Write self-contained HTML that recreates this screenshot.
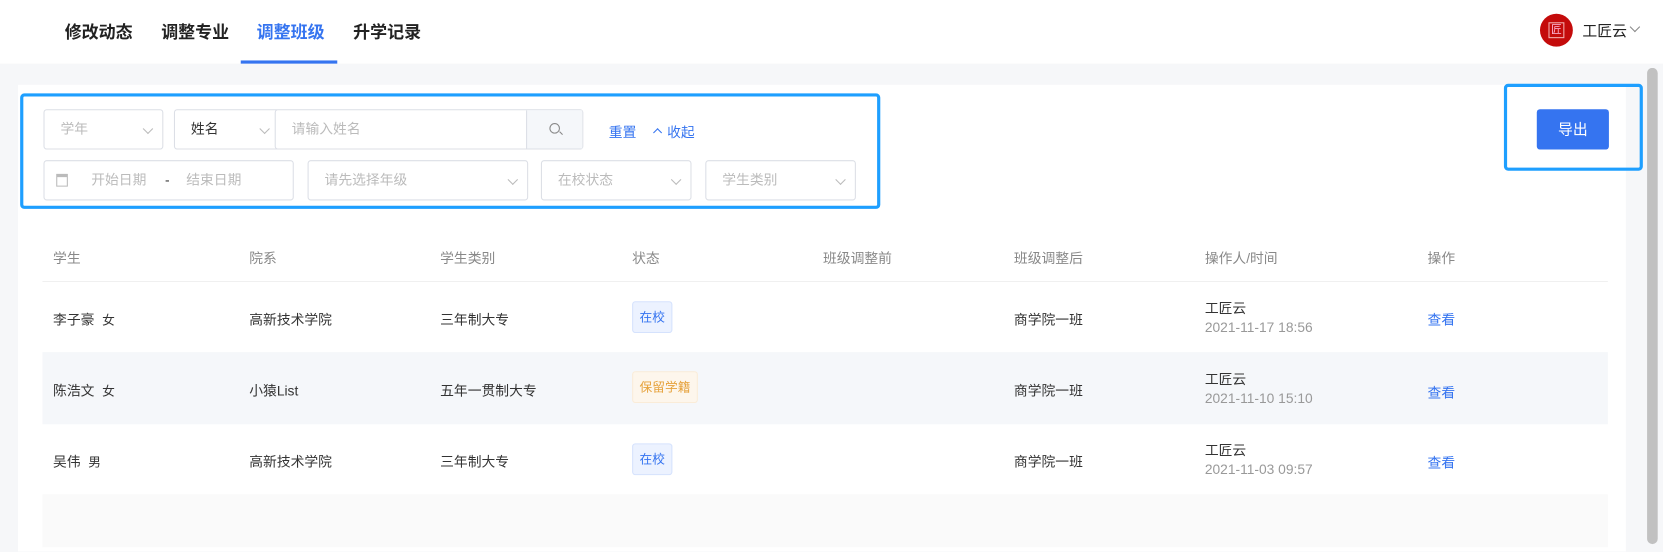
<!DOCTYPE html>
<html><head><meta charset="utf-8"><style>
*{box-sizing:border-box;margin:0;padding:0}
body{width:1663px;height:513px;overflow:hidden;background:#f6f7f9;font-family:"Liberation Sans","Noto Sans CJK SC",sans-serif;font-size:13px;color:#333;position:relative}
#s{position:absolute;left:0;top:0;width:1568px;height:484px;transform:scale(1.06059);transform-origin:0 0}
.hdr{position:absolute;left:0;top:0;width:1568px;height:60px;background:#fff}
.tab{position:absolute;top:17px;font-size:16px;font-weight:bold;color:#222}
.card{position:absolute;left:17px;top:80px;width:1516px;height:440px;background:#fff}
.abs{position:absolute}
.inp{position:absolute;border:1px solid #dcdfe6;border-radius:3px;height:38px;color:#bbb;font-size:13px;line-height:36px;padding-left:15px;background:#fff}
.chev{position:absolute;right:10px;top:14px;width:7px;height:7px;border-right:1px solid #bbb;border-bottom:1px solid #bbb;transform:rotate(45deg)}
.th{position:absolute;top:233px;color:#888;font-size:13px}
.row{position:absolute;left:40px;width:1476px}
.c{position:absolute;font-size:13px;color:#333}
.tag{position:absolute;border-radius:3px;font-size:12px;height:30px;line-height:28px;padding:0 6px}
.blue{background:#ecf2ff;border:1px solid #d5e2fd;color:#3574f0}
.org{background:#fdf6ec;border:1px solid #faecd8;color:#e6a23c}
.lk{color:#3574f0}
.gray{color:#999}
</style></head><body><div id="s">
<div class="hdr">
<div class="tab" style="left:61px">修改动态</div>
<div class="tab" style="left:152px">调整专业</div>
<div class="tab" style="left:242px;color:#3574f0">调整班级</div>
<div class="tab" style="left:333px">升学记录</div>
<div class="abs" style="left:227px;top:57px;width:91px;height:3px;background:#3574f0"></div>
<div class="abs" style="left:1452px;top:13px;width:31px;height:31px;border-radius:50%;background:#c40b0b"><div style="position:absolute;left:8px;top:8px;width:15px;height:15px;border:1px solid #f3b0b0;font-size:10px;color:#fbd;line-height:13px;text-align:center">匠</div></div>
<div class="abs" style="left:1492px;top:19px;font-size:14px;color:#222">工匠云</div>
<div class="abs" style="left:1538px;top:22px;width:7px;height:7px;border-right:1px solid #888;border-bottom:1px solid #888;transform:rotate(45deg)"></div>
</div>
<div class="abs" style="left:1553px;top:64px;width:10px;height:449px;background:#c1c1c1;border-radius:5px"></div>
<div class="card"></div>
<div class="abs" style="left:19px;top:88px;width:811px;height:109px;border:3px solid #1e9fff;border-radius:4px"></div>
<div class="abs" style="left:1418px;top:79px;width:131px;height:82px;border:3px solid #1e9fff;border-radius:4px"></div>
<div class="abs" style="left:1449px;top:103px;width:68px;height:38px;background:#3574f0;border-radius:3px;color:#fff;font-size:14px;line-height:38px;text-align:center">导出</div>
<div class="inp" style="left:41px;top:103px;width:113px">学年<span class="chev"></span></div>
<div class="inp" style="left:164px;top:103px;width:100px;color:#333">姓名<span class="chev"></span></div>
<div class="inp" style="left:259px;top:103px;width:291px;background:#fff;border-radius:3px">请输入姓名</div>
<div class="abs" style="left:496px;top:104px;width:53px;height:36px;background:#f5f7fa;border-left:1px solid #dcdfe6"><div style="position:absolute;left:21px;top:12px;width:10px;height:10px;border:1px solid #888;border-radius:50%"></div><div style="position:absolute;left:30px;top:21px;width:4px;height:1px;background:#888;transform:rotate(45deg)"></div></div>
<div class="abs lk" style="left:574px;top:114px">重置</div>
<div class="abs lk" style="left:617px;top:114px"><span style="display:inline-block;width:6px;height:6px;border-left:1px solid #3574f0;border-top:1px solid #3574f0;transform:rotate(45deg);margin-right:6px;position:relative;top:-1px"></span>收起</div>
<div class="inp" style="left:41px;top:151px;width:236px;padding-left:44px">开始日期 <span style="color:#333;margin:0 12px 0 14px">-</span> 结束日期<div style="position:absolute;left:11px;top:12px;width:11px;height:12px;border:1px solid #bbb;border-top-width:3px"></div></div>
<div class="inp" style="left:290px;top:151px;width:208px">请先选择年级<span class="chev"></span></div>
<div class="inp" style="left:510px;top:151px;width:142px">在校状态<span class="chev"></span></div>
<div class="inp" style="left:665px;top:151px;width:142px">学生类别<span class="chev"></span></div>
<div class="th" style="left:50px">学生</div><div class="th" style="left:235px">院系</div><div class="th" style="left:415px">学生类别</div><div class="th" style="left:596px">状态</div><div class="th" style="left:776px">班级调整前</div><div class="th" style="left:956px">班级调整后</div><div class="th" style="left:1136px">操作人/时间</div><div class="th" style="left:1346px">操作</div>
<div class="abs" style="left:40px;top:265px;width:1476px;height:1px;background:#f0f0f0"></div>
<div class="row" style="top:266px;height:66px;background:#fff"></div>
<div class="row" style="top:332px;height:68px;background:#f5f7fa"></div>
<div class="row" style="top:466px;height:50px;background:#fafafa"></div>
<div class="c" style="left:50px;top:291px">李子豪 &nbsp;<span style="font-size:12px">女</span></div>
<div class="c" style="left:235px;top:291px">高新技术学院</div><div class="c" style="left:415px;top:291px">三年制大专</div>
<div class="tag blue" style="left:596px;top:284px">在校</div>
<div class="c" style="left:956px;top:291px">商学院一班</div>
<div class="c" style="left:1136px;top:280px">工匠云</div><div class="c gray" style="left:1136px;top:301px">2021-11-17 18:56</div>
<div class="c lk" style="left:1346px;top:291px">查看</div>
<div class="c" style="left:50px;top:358px">陈浩文 &nbsp;<span style="font-size:12px">女</span></div>
<div class="c" style="left:235px;top:358px">小猿List</div><div class="c" style="left:415px;top:358px">五年一贯制大专</div>
<div class="tag org" style="left:596px;top:350px">保留学籍</div>
<div class="c" style="left:956px;top:358px">商学院一班</div>
<div class="c" style="left:1136px;top:347px">工匠云</div><div class="c gray" style="left:1136px;top:368px">2021-11-10 15:10</div>
<div class="c lk" style="left:1346px;top:360px">查看</div>
<div class="c" style="left:50px;top:425px">吴伟 &nbsp;<span style="font-size:12px">男</span></div>
<div class="c" style="left:235px;top:425px">高新技术学院</div><div class="c" style="left:415px;top:425px">三年制大专</div>
<div class="tag blue" style="left:596px;top:418px">在校</div>
<div class="c" style="left:956px;top:425px">商学院一班</div>
<div class="c" style="left:1136px;top:414px">工匠云</div><div class="c gray" style="left:1136px;top:435px">2021-11-03 09:57</div>
<div class="c lk" style="left:1346px;top:426px">查看</div>
</div></body></html>
